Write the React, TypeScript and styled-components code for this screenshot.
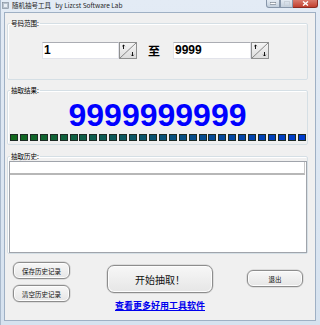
import styled, { createGlobalStyle } from 'styled-components';

const GlobalStyle = createGlobalStyle`
    html, body {
        margin: 0;
        padding: 0;
        background: #ffffff;
    }
    body {
        font-family: "Noto Sans CJK SC", "Noto Sans", sans-serif;
        color: #000;
    }
`;

const Window = styled.div`
    width: 320px;
    height: 325px;
    display: flex;
    flex-direction: column;
    background: linear-gradient(#e3ebf5, #d6e2ef);
    overflow: hidden;
    box-sizing: border-box;
    border-left: 1px solid #a9b9cc;
`;

const TitleBar = styled.div`
    height: 12px;
    display: flex;
    align-items: flex-start;
    flex-shrink: 0;
`;

const TitleIcon = styled.svg`
    margin: 2px 0 0 1px;
`;

const TitleText = styled.div`
    margin-left: 3px;
    font-size: 6.5px;
    line-height: 10px;
    color: #1e1e1e;
    white-space: pre;
`;

const CaptionGroup = styled.div`
    margin-left: auto;
    margin-right: 2px;
    display: flex;
`;

const CaptionButton = styled.div<{ $w: number; $close?: boolean }>`
    width: ${(p) => p.$w}px;
    height: 8px;
    box-sizing: border-box;
    display: flex;
    align-items: center;
    justify-content: center;
    border: 1px solid ${(p) => (p.$close ? '#8b2b22' : '#8796aa')};
    border-top: none;
    background: ${(p) =>
        p.$close ? 'linear-gradient(#d97a6d, #c2402f)' : 'linear-gradient(#e4ebf3, #c3cfdc)'};
    &:first-child {
        border-bottom-left-radius: 3px;
    }
    &:last-child {
        border-bottom-right-radius: 3px;
        border-left: none;
    }
`;

const Client = styled.div`
    flex: 1;
    margin: 0 4px 4px 3px;
    background: #f0f0f0;
    border: 1px solid #9fb0c4;
    display: flex;
    flex-direction: column;
`;

const GroupBox = styled.fieldset<{ $top: number }>`
    margin: ${(p) => p.$top}px 7px 0 2px;
    padding: 0;
    border: 1px solid #d5dfe5;
    border-radius: 2px;
    box-shadow: inset 1px 1px 0 #fff;
    min-width: 0;
`;

const Legend = styled.legend`
    margin-left: 2px;
    padding: 0 1px;
    font-size: 6.5px;
    line-height: 10px;
    color: #000;
`;

const RangeRow = styled.div`
    display: flex;
    align-items: center;
    padding: 14px 0 20px 34px;
`;

const TextBox = styled.div<{ $w: number }>`
    width: ${(p) => p.$w}px;
    height: 17px;
    box-sizing: border-box;
    background: #fff;
    border: 1px solid #e2e3ea;
    border-top-color: #abadb3;
    padding-left: 1px;
    font-family: "Liberation Sans", Arial, sans-serif;
    font-weight: bold;
    font-size: 12px;
    line-height: 15px;
`;

const Zhi = styled.div`
    margin: 0 13px 0 11px;
    font-weight: bold;
    font-size: 12px;
    line-height: 14px;
`;

const BigNumber = styled.div`
    padding-top: 4px;
    text-align: center;
    font-family: "Liberation Sans", Arial, sans-serif;
    font-weight: bold;
    font-size: 32px;
    line-height: 32px;
    color: #0000ff;
`;

const Blocks = styled.div`
    display: flex;
    justify-content: space-between;
    height: 7px;
    margin: 3px 1px 3px 2px;
`;

const Block = styled.div<{ $color: string }>`
    width: 8px;
    height: 7px;
    box-sizing: border-box;
    background: ${(p) => p.$color};
    border: 1px solid #1c2a24;
`;

const ListBox = styled.div`
    height: 92px;
    margin: 0 0 0 1px;
    box-sizing: border-box;
    background: #fff;
    border: 1px solid #a0a4ab;
`;

const ListTop = styled.div`
    height: 11px;
    margin-right: 1px;
    border-bottom: 2px solid #b7b7b7;
    border-right: 1px solid #c8c8c8;
`;

const BottomArea = styled.div`
    display: flex;
    align-items: flex-start;
    padding: 8px 0 0 8px;
`;

const LeftColumn = styled.div`
    display: flex;
    flex-direction: column;
    gap: 6px;
`;

const CenterColumn = styled.div`
    margin-left: 37px;
    padding-top: 3px;
    display: flex;
    flex-direction: column;
    align-items: center;
`;

const Button = styled.div<{ $w: number; $h: number; $size: number; $mt?: number }>`
    width: ${(p) => p.$w}px;
    height: ${(p) => p.$h}px;
    margin-top: ${(p) => p.$mt ?? 0}px;
    box-sizing: border-box;
    display: flex;
    align-items: center;
    justify-content: center;
    border: 1.5px solid #8d8d8d;
    border-radius: ${(p) => (p.$h > 20 ? 7 : 6)}px;
    background: linear-gradient(#f7f7f7, #e6e6e6);
    box-shadow: inset 0 0 0 1px #fdfdfd, 0 0 0 0.5px #c8c8c8;
    font-size: ${(p) => p.$size}px;
    color: #111;
`;

const Link = styled.div`
    margin-top: 8px;
    font-size: 9px;
    line-height: 10px;
    font-weight: bold;
    color: #0000ee;
    text-decoration: underline;
`;

const ExitWrap = styled.div`
    margin-left: 34px;
`;

function SpinButton() {
    return (
        <svg width="18" height="17" viewBox="0 0 18 17">
            <defs>
                <linearGradient id="spinbg" x1="0" y1="0" x2="0" y2="1">
                    <stop offset="0" stopColor="#f6f6f6" />
                    <stop offset="1" stopColor="#dcdcdc" />
                </linearGradient>
            </defs>
            <rect x="0.5" y="0.5" width="17" height="16" fill="url(#spinbg)" stroke="#8f9090" />
            <line x1="1" y1="16" x2="17" y2="1" stroke="#6e6e6e" strokeWidth="0.8" />
            <path d="M4.5 7 V3 M3.3 4.2 L4.5 3 L5.7 4.2" stroke="#000" strokeWidth="0.9" fill="none" />
            <path d="M13.5 10 V14 M12.3 12.8 L13.5 14 L14.7 12.8" stroke="#000" strokeWidth="0.9" fill="none" />
        </svg>
    );
}

const blockColor = (i: number, n: number) => {
    const t = i / (n - 1);
    const r = Math.round(18 * (1 - t));
    const g = Math.round(105 * (1 - t) + 60 * t);
    const b = Math.round(30 * (1 - t) + 205 * t);
    return `rgb(${r},${g},${b})`;
};

const App = () => {
    const blocks = Array.from({ length: 30 }, (_, i) => blockColor(i, 30));

    return (
        <>
            <GlobalStyle />
            <Window>
                <TitleBar>
                    <TitleIcon width="7" height="7" viewBox="0 0 7 7">
                        <rect x="0.5" y="0.5" width="6" height="6" fill="#b9c3cf" stroke="#7d8794" strokeWidth="0.6" />
                        <rect x="2" y="2" width="3" height="3" fill="#e9eef4" />
                    </TitleIcon>
                    <TitleText>随机抽号工具   by Lizcst Software Lab</TitleText>
                    <CaptionGroup>
                        <CaptionButton $w={14}>
                            <svg width="6" height="3" viewBox="0 0 6 3">
                                <rect x="0" y="0.5" width="6" height="2" fill="#fff" stroke="#4e5b6a" strokeWidth="0.5" />
                            </svg>
                        </CaptionButton>
                        <CaptionButton $w={13}>
                            <svg width="6" height="5" viewBox="0 0 6 5">
                                <rect x="0.5" y="0.5" width="5" height="4" fill="none" stroke="#c9d1da" strokeWidth="1" />
                            </svg>
                        </CaptionButton>
                        <CaptionButton $w={25} $close>
                            <svg width="7" height="5" viewBox="0 0 7 5">
                                <path d="M1 0.5 L6 4.5 M6 0.5 L1 4.5" stroke="#fff" strokeWidth="1.4" />
                            </svg>
                        </CaptionButton>
                    </CaptionGroup>
                </TitleBar>
                <Client>
                    <GroupBox $top={5}>
                        <Legend>号码范围:</Legend>
                        <RangeRow>
                            <TextBox $w={77}>1</TextBox>
                            <SpinButton />
                            <Zhi>至</Zhi>
                            <TextBox $w={78}>9999</TextBox>
                            <SpinButton />
                        </RangeRow>
                    </GroupBox>
                    <GroupBox $top={5}>
                        <Legend>抽取结果:</Legend>
                        <BigNumber>9999999999</BigNumber>
                        <Blocks>
                            {blocks.map((c, i) => (
                                <Block key={i} $color={c} />
                            ))}
                        </Blocks>
                    </GroupBox>
                    <GroupBox $top={6}>
                        <Legend>抽取历史:</Legend>
                        <ListBox>
                            <ListTop />
                        </ListBox>
                    </GroupBox>
                    <BottomArea>
                        <LeftColumn>
                            <Button $w={57} $h={17} $size={6.5}>保存历史记录</Button>
                            <Button $w={57} $h={17} $size={6.5}>清空历史记录</Button>
                        </LeftColumn>
                        <CenterColumn>
                            <Button $w={106} $h={28} $size={10}>开始抽取！</Button>
                            <Link>查看更多好用工具软件</Link>
                        </CenterColumn>
                        <ExitWrap>
                            <Button $w={56} $h={17} $size={6.5} $mt={8}>退出</Button>
                        </ExitWrap>
                    </BottomArea>
                </Client>
            </Window>
        </>
    );
};

export default App;
